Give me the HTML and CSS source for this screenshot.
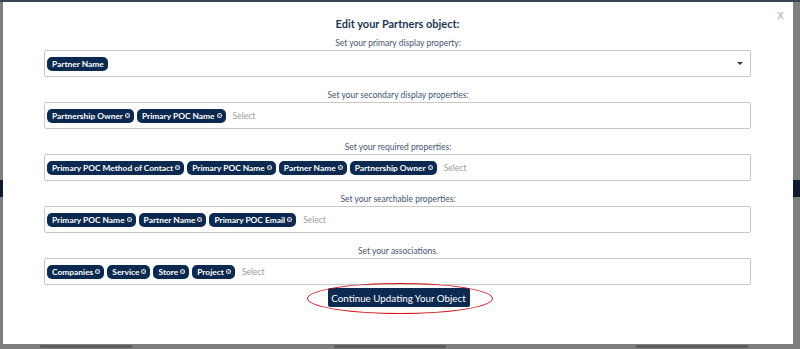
FILE: index.html
```html
<!DOCTYPE html>
<html>
<head>
<meta charset="utf-8">
<link rel="stylesheet" href="styles.css">
</head>
<body>
<div class="page">
  <div class="topline"></div>
  <div class="navbar"></div>
  <div class="foot">
    <span class="ghost g1"></span>
    <span class="ghost g2"></span>
    <span class="ghost g3"></span>
  </div>
</div>

<div class="modal">
  <div class="close">x</div>
  <h1 class="title">Edit your Partners object:</h1>

  <div class="section first">
    <div class="label">Set your primary display property:</div>
    <div class="box">
      <span class="tag">Partner Name</span>
      <span class="caret"></span>
    </div>
  </div>

  <div class="section">
    <div class="label">Set your secondary display properties:</div>
    <div class="box">
      <span class="tag">Partnership Owner <i class="x"></i></span>
      <span class="tag">Primary POC Name <i class="x"></i></span>
      <span class="ph">Select</span>
    </div>
  </div>

  <div class="section">
    <div class="label">Set your required properties:</div>
    <div class="box">
      <span class="tag">Primary POC Method of Contact <i class="x"></i></span>
      <span class="tag">Primary POC Name <i class="x"></i></span>
      <span class="tag">Partner Name <i class="x"></i></span>
      <span class="tag">Partnership Owner <i class="x"></i></span>
      <span class="ph">Select</span>
    </div>
  </div>

  <div class="section">
    <div class="label">Set your searchable properties:</div>
    <div class="box">
      <span class="tag">Primary POC Name <i class="x"></i></span>
      <span class="tag">Partner Name <i class="x"></i></span>
      <span class="tag">Primary POC Email <i class="x"></i></span>
      <span class="ph">Select</span>
    </div>
  </div>

  <div class="section">
    <div class="label">Set your associations.</div>
    <div class="box">
      <span class="tag">Companies <i class="x"></i></span>
      <span class="tag">Service <i class="x"></i></span>
      <span class="tag">Store <i class="x"></i></span>
      <span class="tag">Project <i class="x"></i></span>
      <span class="ph">Select</span>
    </div>
  </div>

  <div class="actions">
    <button class="btn">Continue Updating Your Object</button>
    <span class="ring"></span>
  </div>
</div>
</body>
</html>
```

FILE: styles.css
```css
html, body {
  margin: 0;
  padding: 0;
}
body {
  width: 800px;
  height: 349px;
  overflow: hidden;
  background: #7e7e7e;
  font-family: Lato, "Open Sans", sans-serif;
  position: relative;
}
.page {
  height: 349px;
  display: flex;
  flex-direction: column;
}
.topline {
  height: 2px;
  background: #3c4550;
}
.navbar {
  margin-top: 178px;
  height: 17px;
  background: #0e1c2e;
}
.foot {
  margin-top: auto;
  height: 5px;
  position: relative;
  overflow: hidden;
}
.ghost {
  position: absolute;
  top: 1px;
  height: 3px;
  background: #5e5e5e;
  border-radius: 1px;
}
.g1 { left: 40px; width: 92px; }
.g2 { left: 334px; width: 112px; }
.g3 { left: 636px; width: 112px; }

.modal {
  position: absolute;
  left: 3px;
  top: 2px;
  width: 790px;
  height: 342px;
  box-sizing: border-box;
  background: #ffffff;
  padding: 15px 42px 0 41px;
  display: flex;
  flex-direction: column;
}
.close {
  position: absolute;
  right: 9px;
  top: 6px;
  font-size: 12px;
  color: #b4b4b4;
  font-family: "DejaVu Sans", sans-serif;
}
.title {
  margin: 0;
  font-size: 11px;
  line-height: 14px;
  font-weight: 700;
  color: #1f3656;
  text-align: center;
}
.section {
  display: flex;
  flex-direction: column;
  margin-top: 12px;
}
.section.first {
  margin-top: 6px;
}
.label {
  font-size: 8.5px;
  line-height: 12px;
  color: #3f5672;
  text-align: center;
  margin-bottom: 1px;
  margin-left: 1px;
}
.box {
  height: 27px;
  box-sizing: border-box;
  border: 1px solid #c8c8c8;
  border-radius: 2px;
  padding: 0 2px;
  display: flex;
  align-items: center;
  gap: 3px;
  position: relative;
}
.tag {
  display: inline-flex;
  align-items: center;
  gap: 2px;
  height: 14px;
  padding: 0 4px 0 5px;
  border-radius: 5px;
  background: #0c2a4f;
  color: #ffffff;
  font-size: 8.4px;
  font-weight: 700;
  white-space: nowrap;
}
.x {
  width: 5px;
  height: 5px;
  border-radius: 50%;
  background: #d6dbe2;
  position: relative;
  display: inline-block;
}
.x::before, .x::after {
  content: "";
  position: absolute;
  left: 1px;
  top: 2px;
  width: 3px;
  height: 1px;
  background: #0c2a4f;
  transform: rotate(45deg);
}
.x::after {
  transform: rotate(-45deg);
}
.ph {
  margin-left: 4px;
  font-size: 8.5px;
  color: #9a9a9a;
}
.caret {
  margin-left: auto;
  margin-right: 5px;
  width: 0;
  height: 0;
  border-left: 3px solid transparent;
  border-right: 3px solid transparent;
  border-top: 3px solid #2a3a4e;
}
.actions {
  margin-top: 3px;
  display: flex;
  justify-content: center;
  position: relative;
}
.btn {
  height: 19px;
  width: 142px;
  margin-left: 2px;
  border: none;
  border-radius: 2px;
  background: #0c2a4f;
  color: #ffffff;
  font-family: Lato, "Open Sans", sans-serif;
  font-size: 9.8px;
  padding: 0;
  white-space: nowrap;
}
.ring {
  position: absolute;
  left: 263px;
  top: -5px;
  width: 186px;
  height: 31px;
  box-sizing: border-box;
  border: 1.5px solid #d4121c;
  border-radius: 50%;
}
```
